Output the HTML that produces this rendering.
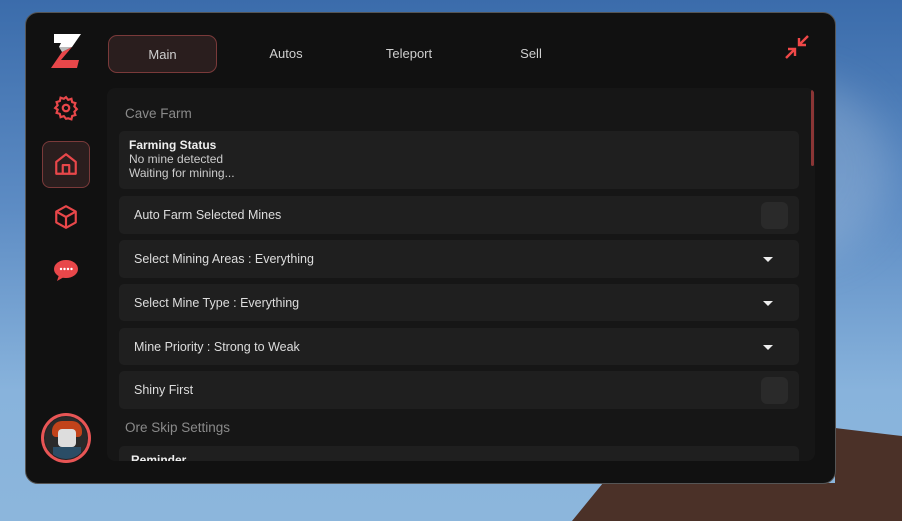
<!DOCTYPE html><html style="width:902px;height:521px;overflow:hidden"><head><style>
*{margin:0;padding:0;box-sizing:border-box}
body{width:902px;height:521px;overflow:hidden;position:relative;font-family:"Liberation Sans",sans-serif;background:linear-gradient(180deg,#3b6cab 0%,#5d8cc4 40%,#88b3dc 75%,#8cb6dc 100%)}
.cl{position:absolute;border-radius:50%;background:rgba(200,215,230,.25);filter:blur(20px)}
.win{position:absolute;left:25px;top:12px;width:811px;height:472px;background:#111;border:1px solid #555;border-radius:13px}
.tab{position:absolute;top:22px;height:38px;color:#cfcfcf;font-size:13px;line-height:38px;text-align:center}
.panel{position:absolute;left:81px;top:75px;width:708px;height:373px;background:#161616;border-radius:8px;overflow:hidden}
.row{position:absolute;left:12px;width:680px;background:#1f1f1f;border-radius:5px;color:#ddd;font-size:12.5px}
.row span{position:absolute;left:15px;top:50%;transform:translateY(-50%)}
.tg{position:absolute;right:11px;top:6px;width:27px;height:27px;background:#2a2a2a;border-radius:6px}
.ar{position:absolute;right:26px;top:50%;margin-top:-2px;width:0;height:0;border-left:5px solid transparent;border-right:5px solid transparent;border-top:5px solid #eee}
.h{position:absolute;left:18px;color:#8a8a8a;font-size:13.5px}
</style></head><body>
<div class="cl" style="left:700px;top:80px;width:190px;height:180px"></div>
<svg style="position:absolute;left:0;top:0" width="902" height="521"><polygon points="835,428 902,436 902,521 572,521 603,483 835,483" fill="#4b3128"/></svg>
<div class="win">
<svg style="position:absolute;left:24px;top:20px" width="32" height="36" viewBox="0 0 32 36"><polygon points="4,1 31,1 22,14 9,14 11,10 4,10" fill="#fff"/><polygon points="22,14 11,27 29,27 27,35 1,35 12,19" fill="#e8474a"/><polygon points="9,14 22,14 12,19" fill="#bbb"/></svg>
<svg style="position:absolute;left:27px;top:82px" width="26" height="26" viewBox="0 0 24 24" fill="none" stroke="#e8474a" stroke-width="2"><circle cx="12" cy="12" r="3"/><path d="M12 2l2 2.5 3-1 .7 3.1 3 .9-1 3 2.3 2.5-2.3 2.5 1 3-3 .9-.7 3.1-3-1L12 22l-2-2.5-3 1-.7-3.1-3-.9 1-3L2 12l2.3-2.5-1-3 3-.9.7-3.1 3 1z"/></svg>
<div style="position:absolute;left:16px;top:128px;width:48px;height:47px;background:#2a1e1e;border:1px solid #7a3a3a;border-radius:8px"></div>
<svg style="position:absolute;left:27px;top:138px" width="26" height="26" viewBox="0 0 24 24" fill="none" stroke="#e8474a" stroke-width="2" stroke-linejoin="round"><path d="M3 10l9-7 9 7v11H3z"/><path d="M9 21v-8h6v8"/></svg>
<svg style="position:absolute;left:27px;top:191px" width="26" height="26" viewBox="0 0 24 24" fill="none" stroke="#e8474a" stroke-width="2" stroke-linejoin="round"><path d="M12 2l9 5v10l-9 5-9-5V7z"/><path d="M3 7l9 5 9-5M12 12v10"/></svg>
<svg style="position:absolute;left:27px;top:245px" width="26" height="24" viewBox="0 0 26 24"><ellipse cx="13" cy="11" rx="12" ry="9" fill="#e8474a"/><path d="M6 17l-2 6 7-4z" fill="#e8474a"/><g fill="#fff"><circle cx="8" cy="11" r="1.2"/><circle cx="11.5" cy="11" r="1.2"/><circle cx="15" cy="11" r="1.2"/><circle cx="18.5" cy="11" r="1.2"/></g></svg>
<div style="position:absolute;left:15px;top:400px;width:50px;height:50px;border-radius:50%;background:#e85555;padding:3px"><div style="width:44px;height:44px;border-radius:50%;background:#2a2a2a;border:1px solid #222;position:relative;overflow:hidden">
<div style="position:absolute;left:7px;top:4px;width:30px;height:16px;background:#c2431a;border-radius:10px 10px 4px 4px"></div>
<div style="position:absolute;left:13px;top:12px;width:18px;height:18px;background:#ddd;border-radius:4px"></div>
<div style="position:absolute;left:8px;top:30px;width:28px;height:16px;background:#2a4d66"></div></div></div>
<div class="tab" style="left:82px;width:109px;background:#2a1e1e;border:1px solid #7a3a3a;border-radius:9px">Main</div>
<div class="tab" style="left:225px;width:70px">Autos</div>
<div class="tab" style="left:343px;width:80px">Teleport</div>
<div class="tab" style="left:470px;width:70px">Sell</div>
<svg style="position:absolute;left:758px;top:21px" width="26" height="26" viewBox="0 0 26 26" stroke="#f04848" stroke-width="2.4" fill="none"><path d="M24 2l-9 9M15 4v7h7"/><path d="M2 24l9-9M4 15h7v7"/></svg>
<div class="panel">
<div style="position:absolute;right:1px;top:2px;width:3px;height:76px;background:#8a3535;border-radius:2px"></div>
<div class="h" style="top:18px">Cave Farm</div>
<div class="row" style="top:43px;height:58px"><div style="position:absolute;left:10px;top:7px;line-height:14px;font-size:12px;color:#ccc"><b style="color:#eee">Farming Status</b><br>No mine detected<br>Waiting for mining...</div></div>
<div class="row" style="top:108px;height:38px"><span>Auto Farm Selected Mines</span><div class="tg"></div></div>
<div class="row" style="top:152px;height:38px"><span>Select Mining Areas : Everything</span><div class="ar"></div></div>
<div class="row" style="top:196px;height:37px"><span>Select Mine Type : Everything</span><div class="ar"></div></div>
<div class="row" style="top:240px;height:37px"><span>Mine Priority : Strong to Weak</span><div class="ar"></div></div>
<div class="row" style="top:283px;height:38px"><span>Shiny First</span><div class="tg"></div></div>
<div class="h" style="top:332px">Ore Skip Settings</div>
<div class="row" style="top:358px;height:30px"><b style="position:absolute;left:12px;top:7px;font-size:12px;color:#eee">Reminder</b></div>
</div>
</div>
</body></html>
